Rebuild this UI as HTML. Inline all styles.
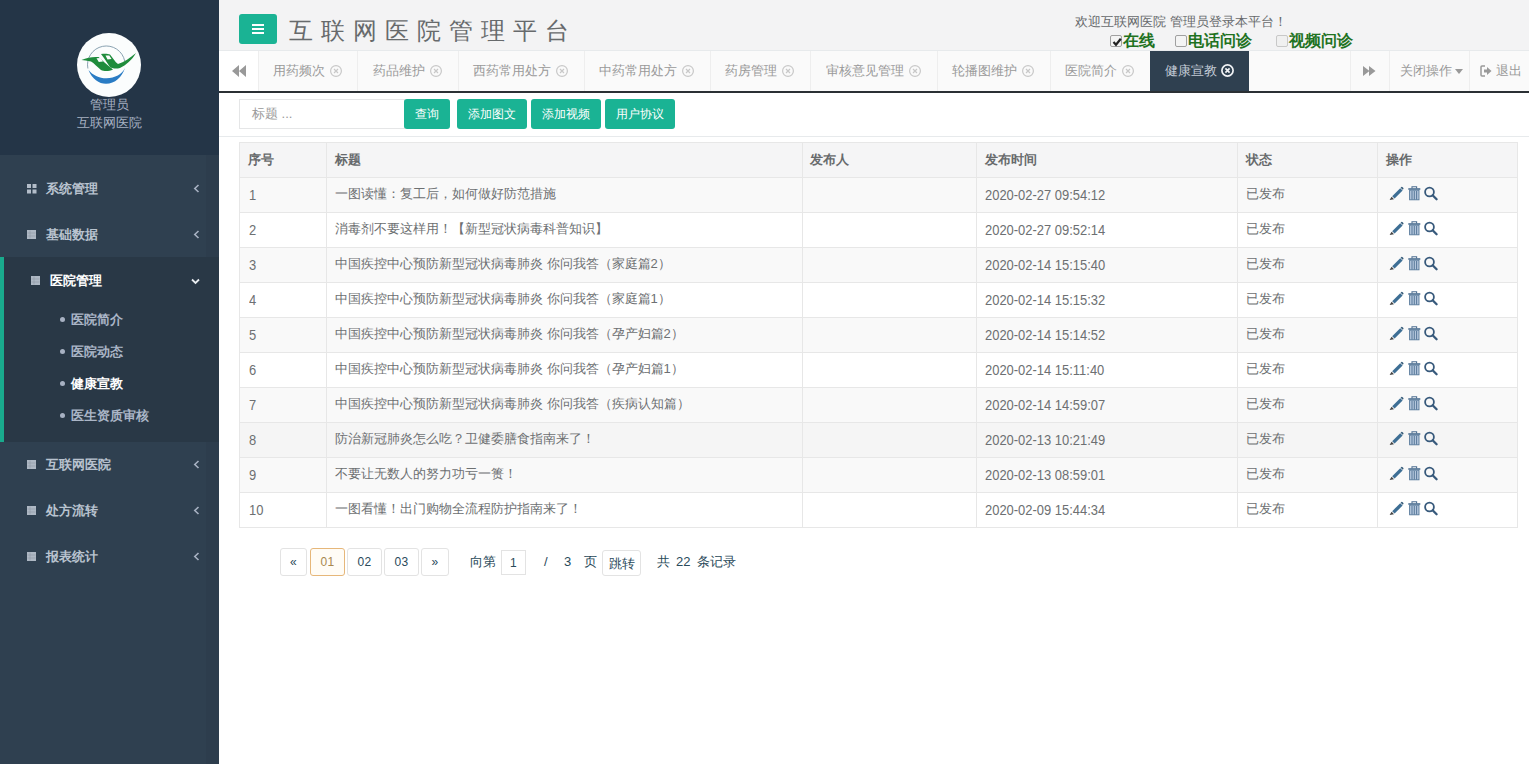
<!DOCTYPE html>
<html><head><meta charset="utf-8">
<style>
*{margin:0;padding:0;box-sizing:border-box}
html,body{width:1529px;height:764px;overflow:hidden;background:#fff;font-family:"Liberation Sans",sans-serif;font-size:13px;color:#676a6c}
.a{position:absolute;white-space:nowrap}
#side{position:absolute;left:0;top:0;width:219px;height:764px;background:#2f4050}
#navh{position:absolute;left:0;top:0;width:219px;height:155px;background:#243547}
#logo{position:absolute;left:77px;top:33px;width:64px;height:64px}
.nh-t{position:absolute;left:0;width:219px;text-align:center;color:#a7b1c2;font-size:13px;line-height:18px}
.mi{position:absolute;left:0;width:219px;height:18px;color:#b9c3cf;font-weight:bold;font-size:13px;line-height:18px}
.mi .ic{position:absolute;left:27px;top:4px}
.mi .tx{position:absolute;left:46px;top:0}
.mi .ar{position:absolute;left:193px;top:4px}
#act{position:absolute;left:0;top:257px;width:219px;height:185px;background:#293846;border-left:4px solid #19aa8d}
.sub{position:absolute;left:60px;color:#aab5c6;font-weight:bold;font-size:13px;line-height:18px;white-space:nowrap}
.sub b{display:inline-block;width:5px;height:5px;border-radius:50%;background:#a7b1c2;margin-right:6px;vertical-align:middle;position:relative;top:-1px}
#head{position:absolute;left:219px;top:0;width:1310px;height:51px;background:#f3f3f4;border-bottom:1px solid #e7eaec}
#mbtn{position:absolute;left:239px;top:14px;width:38px;height:30px;background:#1ab394;border-radius:3px}
#mbtn i{position:absolute;left:13px;width:12px;height:2px;background:#fff}
#title{position:absolute;left:289px;top:16px;font-size:24px;letter-spacing:8px;color:#676a6c;line-height:30px;white-space:nowrap}
#tabs{position:absolute;left:219px;top:51px;width:1310px;height:42px;background:#fafafa;border-bottom:2px solid #2b3034}
.tab{position:absolute;top:51px;height:40px;line-height:40px;color:#999;font-size:13px;border-right:1px solid #eee;white-space:nowrap}
.tab span{position:absolute;top:0}
.tab .x{position:absolute;top:14px;width:12px;height:12px}
#tool{position:absolute;left:219px;top:93px;width:1310px;height:44px;border-bottom:1px solid #e7eaec;background:#fff}
#inp{position:absolute;left:239px;top:99px;width:166px;height:30px;border:1px solid #e5e6e7;color:#999;padding-left:12px;line-height:28px;font-size:13px}
.gb{position:absolute;top:99px;height:30px;background:#1ab394;color:#fff;border-radius:3px;font-size:12px;line-height:30px;text-align:center}
#tbl{position:absolute;left:239px;top:142px;width:1279px;height:386px;border:1px solid #e7e7e7}
.thead{position:absolute;left:0;top:0;width:1277px;height:35px;background:#f5f5f6;border-bottom:1px solid #e7e7e7;font-weight:bold}
.row{position:absolute;left:0;width:1277px;height:35px;border-bottom:1px solid #e7e7e7;color:#6d7072}
.row .c{line-height:32px}
.c{position:absolute;top:0;line-height:34px;white-space:nowrap}
.vl{position:absolute;top:0;width:1px;height:384px;background:#e7e7e7}
.ops{position:absolute;left:1149px;top:8px}
.pg{position:absolute;top:548px;height:28px;border:1px solid #e3e3e3;border-radius:3px;text-align:center;line-height:26px;color:#2a4a5a;font-size:12px;letter-spacing:0.3px;background:#fff}
.pt{position:absolute;top:552px;line-height:20px;color:#2a4a5a;font-size:13px;white-space:nowrap}
.cb{width:12px;height:12px;border:1px solid #a0a0a0;border-radius:2px;background:#f4f4f4}

</style></head><body>
<div id="side">
  <div id="navh"></div><div style="position:absolute;left:206px;top:155px;width:13px;height:609px;background:rgba(20,20,30,0.06)"></div>
  <svg id="logo" width="64" height="64" viewBox="0 0 64 64"><circle cx="32" cy="32" r="32" fill="#fbfdfd"/><path d="M10.9,35.5 A18.4,18.4 0 0 1 47.7,28" fill="none" stroke="#7d97a8" stroke-width="0.9"/><path d="M11.5,37 C15,46 22,50.8 29,50.8 C38,50.8 45,44 48,35 C45,41 38,45.3 29.5,45.3 C22,45.3 15.5,42 11.5,37 Z" fill="#2a7cc4"/><path d="M4.5,27 C10,24.5 16,23.5 21.5,24 C25,27 30,32 36,36.5 C32,38.5 27,38.5 24,37 C20,34 17,30 14,28.5 C10,27.5 7,27.5 4.5,27 Z" fill="#1f8c3c"/><path d="M24,21 C27,20.5 31,20.5 33,21.5 C36,25 38,29 41,31 C47,29 53,25 59,20 C55,27 49,32 43,35 C39,36 35,35.5 33,34 C30,30 27,24.5 24,21 Z" fill="#1f8c3c"/><path d="M19.5,25.2 L23.5,25 L26,28.5 L21.8,29Z M28.5,22.5 L32.3,22.5 L34.5,26 L30.5,26.5Z" fill="#fbfdfd"/></svg>
  <div class="nh-t" style="top:96px">管理员</div>
  <div class="nh-t" style="top:114px">互联网医院</div>
  <div class="mi" style="top:180px"><svg class="ic" width="10" height="10" viewBox="0 0 10 10"><path d="M0 0h4v4h-4zM5.5 0h4v4h-4zM0 5.5h4v4h-4zM5.5 5.5h4v4h-4z" fill="#b3bdc9"/></svg><span class="tx">系统管理</span><svg class="ar" width="7" height="9" viewBox="0 0 7 9"><path d="M5.5 1 L1.8 4.5 L5.5 8" fill="none" stroke="#a7b1c2" stroke-width="1.6"/></svg></div>
  <div class="mi" style="top:226px"><svg class="ic" width="10" height="10" viewBox="0 0 10 10"><rect x="0" y="0" width="9" height="9" fill="#aeb8c4"/><path d="M0.5 3h8M0.5 6h8M3 0.5v8" stroke="#8e99a6" stroke-width="0.6"/></svg><span class="tx">基础数据</span><svg class="ar" width="7" height="9" viewBox="0 0 7 9"><path d="M5.5 1 L1.8 4.5 L5.5 8" fill="none" stroke="#a7b1c2" stroke-width="1.6"/></svg></div>
  <div id="act"></div>
  <div class="mi" style="top:272px;color:#fff"><svg class="ic" style="left:31px" width="10" height="10" viewBox="0 0 10 10"><rect x="0" y="0" width="9" height="9" fill="#aeb8c4"/><path d="M0.5 3h8M0.5 6h8M3 0.5v8" stroke="#8e99a6" stroke-width="0.6"/></svg><span class="tx" style="left:50px">医院管理</span><svg class="ar" style="left:191px;top:6px" width="9" height="7" viewBox="0 0 9 7"><path d="M1 1.5 L4.5 5 L8 1.5" fill="none" stroke="#e8ecf0" stroke-width="1.8"/></svg></div>
  <div class="sub" style="top:311px"><b></b>医院简介</div>
  <div class="sub" style="top:343px"><b></b>医院动态</div>
  <div class="sub" style="top:375px;color:#fff"><b></b>健康宣教</div>
  <div class="sub" style="top:407px"><b></b>医生资质审核</div>
  <div class="mi" style="top:456px"><svg class="ic" width="10" height="10" viewBox="0 0 10 10"><rect x="0" y="0" width="9" height="9" fill="#aeb8c4"/><path d="M0.5 3h8M0.5 6h8M3 0.5v8" stroke="#8e99a6" stroke-width="0.6"/></svg><span class="tx">互联网医院</span><svg class="ar" width="7" height="9" viewBox="0 0 7 9"><path d="M5.5 1 L1.8 4.5 L5.5 8" fill="none" stroke="#a7b1c2" stroke-width="1.6"/></svg></div>
  <div class="mi" style="top:502px"><svg class="ic" width="10" height="10" viewBox="0 0 10 10"><rect x="0" y="0" width="9" height="9" fill="#aeb8c4"/><path d="M0.5 3h8M0.5 6h8M3 0.5v8" stroke="#8e99a6" stroke-width="0.6"/></svg><span class="tx">处方流转</span><svg class="ar" width="7" height="9" viewBox="0 0 7 9"><path d="M5.5 1 L1.8 4.5 L5.5 8" fill="none" stroke="#a7b1c2" stroke-width="1.6"/></svg></div>
  <div class="mi" style="top:548px"><svg class="ic" width="10" height="10" viewBox="0 0 10 10"><rect x="0" y="0" width="9" height="9" fill="#aeb8c4"/><path d="M0.5 3h8M0.5 6h8M3 0.5v8" stroke="#8e99a6" stroke-width="0.6"/></svg><span class="tx">报表统计</span><svg class="ar" width="7" height="9" viewBox="0 0 7 9"><path d="M5.5 1 L1.8 4.5 L5.5 8" fill="none" stroke="#a7b1c2" stroke-width="1.6"/></svg></div>
</div>
<div id="head"></div>
<div id="mbtn"><i style="top:10px"></i><i style="top:14px"></i><i style="top:18px"></i></div>
<div id="title">互联网医院管理平台</div>
<div class="a" style="left:1075px;top:13px;line-height:18px;color:#676a6c">欢迎互联网医院 管理员登录本平台！</div>
<div class="a" style="left:1110px;top:33px;line-height:16px;font-size:16px;font-weight:bold;color:#1f721f">
<span class="a cb" style="left:0;top:2px"><svg class="a" style="left:1px;top:1px" width="10" height="10" viewBox="0 0 10 10"><path d="M1.5 5 L4 7.8 L8.8 1.8" fill="none" stroke="#222" stroke-width="2.2"/></svg></span><span class="a" style="left:13px;top:0">在线</span>
<span class="a cb" style="left:65px;top:2px"></span><span class="a" style="left:78px;top:0">电话问诊</span>
<span class="a cb" style="left:166px;top:2px;border-color:#c8c8c8;background:#f0f0f0"></span><span class="a" style="left:179px;top:0">视频问诊</span>
</div>
<div id="tabs"></div>
<div id="tool"></div>
<div id="inp">标题 ...</div>
<div class="gb" style="left:404px;width:46px">查询</div>
<div class="gb" style="left:457px;width:70px">添加图文</div>
<div class="gb" style="left:531px;width:70px">添加视频</div>
<div class="gb" style="left:605px;width:70px">用户协议</div>
<div class="pg" style="left:280px;width:27px">«</div>
<div class="pg" style="left:310px;width:35px;border-color:#e6b77a;color:#a8884e;background:#fffcf6">01</div>
<div class="pg" style="left:347px;width:35px">02</div>
<div class="pg" style="left:384px;width:35px">03</div>
<div class="pg" style="left:421px;width:28px">»</div>
<div class="pt" style="left:470px">向第</div>
<div class="pg" style="left:501px;top:550px;width:25px;height:25px;line-height:25px;border-radius:0">1</div>
<div class="pt" style="left:544px">/</div>
<div class="pt" style="left:564px">3</div>
<div class="pt" style="left:584px">页</div>
<div class="pg" style="left:602px;top:550px;width:39px;height:26px;line-height:25px;font-size:13px;letter-spacing:0">跳转</div>
<div class="pt" style="left:657px">共</div>
<div class="pt" style="left:676px">22</div>
<div class="pt" style="left:697px">条记录</div>
<div class="tab" style="left:219px;width:40px;background:#fff"><svg class="a" style="left:13px;top:14px" width="14" height="12" viewBox="0 0 14 12"><path d="M7 0 L0 6 L7 12Z M14 0 L7 6 L14 12Z" fill="#999"/></svg></div>
<div class="tab" style="left:258px;width:100px"><span style="left:15px">用药频次</span><svg class="x" style="left:72px" viewBox="0 0 12 12"><circle cx="6" cy="6" r="5.4" fill="none" stroke="#c8c8c8" stroke-width="1.2"/><path d="M4 4L8 8M8 4L4 8" stroke="#c8c8c8" stroke-width="1.2"/></svg></div>
<div class="tab" style="left:357px;width:102px"><span style="left:16px">药品维护</span><svg class="x" style="left:73px" viewBox="0 0 12 12"><circle cx="6" cy="6" r="5.4" fill="none" stroke="#c8c8c8" stroke-width="1.2"/><path d="M4 4L8 8M8 4L4 8" stroke="#c8c8c8" stroke-width="1.2"/></svg></div>
<div class="tab" style="left:458px;width:127px"><span style="left:15px">西药常用处方</span><svg class="x" style="left:98px" viewBox="0 0 12 12"><circle cx="6" cy="6" r="5.4" fill="none" stroke="#c8c8c8" stroke-width="1.2"/><path d="M4 4L8 8M8 4L4 8" stroke="#c8c8c8" stroke-width="1.2"/></svg></div>
<div class="tab" style="left:584px;width:127px"><span style="left:15px">中药常用处方</span><svg class="x" style="left:98px" viewBox="0 0 12 12"><circle cx="6" cy="6" r="5.4" fill="none" stroke="#c8c8c8" stroke-width="1.2"/><path d="M4 4L8 8M8 4L4 8" stroke="#c8c8c8" stroke-width="1.2"/></svg></div>
<div class="tab" style="left:710px;width:101px"><span style="left:15px">药房管理</span><svg class="x" style="left:72px" viewBox="0 0 12 12"><circle cx="6" cy="6" r="5.4" fill="none" stroke="#c8c8c8" stroke-width="1.2"/><path d="M4 4L8 8M8 4L4 8" stroke="#c8c8c8" stroke-width="1.2"/></svg></div>
<div class="tab" style="left:810px;width:128px"><span style="left:16px">审核意见管理</span><svg class="x" style="left:99px" viewBox="0 0 12 12"><circle cx="6" cy="6" r="5.4" fill="none" stroke="#c8c8c8" stroke-width="1.2"/><path d="M4 4L8 8M8 4L4 8" stroke="#c8c8c8" stroke-width="1.2"/></svg></div>
<div class="tab" style="left:937px;width:114px"><span style="left:15px">轮播图维护</span><svg class="x" style="left:85px" viewBox="0 0 12 12"><circle cx="6" cy="6" r="5.4" fill="none" stroke="#c8c8c8" stroke-width="1.2"/><path d="M4 4L8 8M8 4L4 8" stroke="#c8c8c8" stroke-width="1.2"/></svg></div>
<div class="tab" style="left:1050px;width:101px"><span style="left:15px">医院简介</span><svg class="x" style="left:72px" viewBox="0 0 12 12"><circle cx="6" cy="6" r="5.4" fill="none" stroke="#c8c8c8" stroke-width="1.2"/><path d="M4 4L8 8M8 4L4 8" stroke="#c8c8c8" stroke-width="1.2"/></svg></div>
<div class="tab" style="left:1150px;width:99px;background:#2f4050;color:#c5cdd8;border-right:0"><span style="left:15px">健康宣教</span><svg class="x" style="left:71px;top:13px;width:13px;height:13px" viewBox="0 0 13 13"><circle cx="6.5" cy="6.5" r="5.6" fill="none" stroke="#f0f2f5" stroke-width="1.7"/><path d="M4.4 4.4L8.6 8.6M8.6 4.4L4.4 8.6" stroke="#f0f2f5" stroke-width="1.7"/></svg></div>
<div class="tab" style="left:1350px;width:40px;border-left:1px solid #eee"><svg class="a" style="left:11px;top:14px" width="14" height="12" viewBox="0 0 14 12"><path d="M1 1 L7.5 6 L1 11Z M7 1 L13.5 6 L7 11Z" fill="#999"/></svg></div>
<div class="tab" style="left:1390px;width:80px"><span style="left:10px">关闭操作</span><svg class="a" style="left:65px;top:18px" width="8" height="5" viewBox="0 0 8 5"><path d="M0 0H8L4 5Z" fill="#999"/></svg></div>
<div class="tab" style="left:1470px;width:59px;border-right:0"><svg class="a" style="left:10px;top:14px" width="12" height="12" viewBox="0 0 12 12"><path d="M5 1H2Q1 1 1 2V10Q1 11 2 11H5" fill="none" stroke="#999" stroke-width="1.5"/><path d="M4 4.5H7V2L11.5 6L7 10V7.5H4Z" fill="#999"/></svg><span style="left:26px">退出</span></div>
<div id="tbl"><div class="thead"><span class="c" style="left:8px">序号</span><span class="c" style="left:95px">标题</span><span class="c" style="left:570px">发布人</span><span class="c" style="left:745px">发布时间</span><span class="c" style="left:1006px">状态</span><span class="c" style="left:1146px">操作</span></div><div class="row" style="top:35px;background:#f9f9f9"><span class="c" style="left:9px;font-size:14px;top:1px;transform:scaleX(0.925);transform-origin:0 0">1</span><span class="c" style="left:95px">一图读懂：复工后，如何做好防范措施</span><span class="c" style="left:745px;font-size:14px;top:1px;transform:scaleX(0.925);transform-origin:0 0">2020-02-27 09:54:12</span><span class="c" style="left:1006px">已发布</span><svg class="ops" width="50" height="16" viewBox="0 0 50 16"><path d="M3.2 10.2 L11.2 2.2 L13.6 4.6 L5.6 12.6 Z" fill="#3d6e94"/><path d="M11.6 1.8 L12.4 1 Q13 0.6 13.6 1.2 L14.4 2 Q14.8 2.6 14.2 3.2 L13.8 3.8 Z" fill="#345a78"/><path d="M0.6 14 L2.6 10.8 L5 13.2 Z" fill="#444"/><rect x="20.6" y="4.2" width="9.4" height="9.6" fill="#b4c6dc" stroke="#56789a" stroke-width="0.9"/><path d="M23 5v8.5M25.3 5v8.5M27.6 5v8.5" stroke="#4d6f92" stroke-width="0.9"/><rect x="19.3" y="2.2" width="12" height="1.6" fill="#4d6f92"/><path d="M23 2.4V0.8H27.6V2.4" fill="none" stroke="#4d6f92" stroke-width="1.1"/><circle cx="40.5" cy="6" r="4.4" fill="none" stroke="#385a7c" stroke-width="1.8"/><path d="M43.6 9.2 L47.6 13.3" stroke="#385a7c" stroke-width="2.3" stroke-linecap="round"/></svg>
</div><div class="row" style="top:70px;background:#fff"><span class="c" style="left:9px;font-size:14px;top:1px;transform:scaleX(0.925);transform-origin:0 0">2</span><span class="c" style="left:95px">消毒剂不要这样用！【新型冠状病毒科普知识】</span><span class="c" style="left:745px;font-size:14px;top:1px;transform:scaleX(0.925);transform-origin:0 0">2020-02-27 09:52:14</span><span class="c" style="left:1006px">已发布</span><svg class="ops" width="50" height="16" viewBox="0 0 50 16"><path d="M3.2 10.2 L11.2 2.2 L13.6 4.6 L5.6 12.6 Z" fill="#3d6e94"/><path d="M11.6 1.8 L12.4 1 Q13 0.6 13.6 1.2 L14.4 2 Q14.8 2.6 14.2 3.2 L13.8 3.8 Z" fill="#345a78"/><path d="M0.6 14 L2.6 10.8 L5 13.2 Z" fill="#444"/><rect x="20.6" y="4.2" width="9.4" height="9.6" fill="#b4c6dc" stroke="#56789a" stroke-width="0.9"/><path d="M23 5v8.5M25.3 5v8.5M27.6 5v8.5" stroke="#4d6f92" stroke-width="0.9"/><rect x="19.3" y="2.2" width="12" height="1.6" fill="#4d6f92"/><path d="M23 2.4V0.8H27.6V2.4" fill="none" stroke="#4d6f92" stroke-width="1.1"/><circle cx="40.5" cy="6" r="4.4" fill="none" stroke="#385a7c" stroke-width="1.8"/><path d="M43.6 9.2 L47.6 13.3" stroke="#385a7c" stroke-width="2.3" stroke-linecap="round"/></svg>
</div><div class="row" style="top:105px;background:#f9f9f9"><span class="c" style="left:9px;font-size:14px;top:1px;transform:scaleX(0.925);transform-origin:0 0">3</span><span class="c" style="left:95px">中国疾控中心预防新型冠状病毒肺炎 你问我答（家庭篇2）</span><span class="c" style="left:745px;font-size:14px;top:1px;transform:scaleX(0.925);transform-origin:0 0">2020-02-14 15:15:40</span><span class="c" style="left:1006px">已发布</span><svg class="ops" width="50" height="16" viewBox="0 0 50 16"><path d="M3.2 10.2 L11.2 2.2 L13.6 4.6 L5.6 12.6 Z" fill="#3d6e94"/><path d="M11.6 1.8 L12.4 1 Q13 0.6 13.6 1.2 L14.4 2 Q14.8 2.6 14.2 3.2 L13.8 3.8 Z" fill="#345a78"/><path d="M0.6 14 L2.6 10.8 L5 13.2 Z" fill="#444"/><rect x="20.6" y="4.2" width="9.4" height="9.6" fill="#b4c6dc" stroke="#56789a" stroke-width="0.9"/><path d="M23 5v8.5M25.3 5v8.5M27.6 5v8.5" stroke="#4d6f92" stroke-width="0.9"/><rect x="19.3" y="2.2" width="12" height="1.6" fill="#4d6f92"/><path d="M23 2.4V0.8H27.6V2.4" fill="none" stroke="#4d6f92" stroke-width="1.1"/><circle cx="40.5" cy="6" r="4.4" fill="none" stroke="#385a7c" stroke-width="1.8"/><path d="M43.6 9.2 L47.6 13.3" stroke="#385a7c" stroke-width="2.3" stroke-linecap="round"/></svg>
</div><div class="row" style="top:140px;background:#fff"><span class="c" style="left:9px;font-size:14px;top:1px;transform:scaleX(0.925);transform-origin:0 0">4</span><span class="c" style="left:95px">中国疾控中心预防新型冠状病毒肺炎 你问我答（家庭篇1）</span><span class="c" style="left:745px;font-size:14px;top:1px;transform:scaleX(0.925);transform-origin:0 0">2020-02-14 15:15:32</span><span class="c" style="left:1006px">已发布</span><svg class="ops" width="50" height="16" viewBox="0 0 50 16"><path d="M3.2 10.2 L11.2 2.2 L13.6 4.6 L5.6 12.6 Z" fill="#3d6e94"/><path d="M11.6 1.8 L12.4 1 Q13 0.6 13.6 1.2 L14.4 2 Q14.8 2.6 14.2 3.2 L13.8 3.8 Z" fill="#345a78"/><path d="M0.6 14 L2.6 10.8 L5 13.2 Z" fill="#444"/><rect x="20.6" y="4.2" width="9.4" height="9.6" fill="#b4c6dc" stroke="#56789a" stroke-width="0.9"/><path d="M23 5v8.5M25.3 5v8.5M27.6 5v8.5" stroke="#4d6f92" stroke-width="0.9"/><rect x="19.3" y="2.2" width="12" height="1.6" fill="#4d6f92"/><path d="M23 2.4V0.8H27.6V2.4" fill="none" stroke="#4d6f92" stroke-width="1.1"/><circle cx="40.5" cy="6" r="4.4" fill="none" stroke="#385a7c" stroke-width="1.8"/><path d="M43.6 9.2 L47.6 13.3" stroke="#385a7c" stroke-width="2.3" stroke-linecap="round"/></svg>
</div><div class="row" style="top:175px;background:#f9f9f9"><span class="c" style="left:9px;font-size:14px;top:1px;transform:scaleX(0.925);transform-origin:0 0">5</span><span class="c" style="left:95px">中国疾控中心预防新型冠状病毒肺炎 你问我答（孕产妇篇2）</span><span class="c" style="left:745px;font-size:14px;top:1px;transform:scaleX(0.925);transform-origin:0 0">2020-02-14 15:14:52</span><span class="c" style="left:1006px">已发布</span><svg class="ops" width="50" height="16" viewBox="0 0 50 16"><path d="M3.2 10.2 L11.2 2.2 L13.6 4.6 L5.6 12.6 Z" fill="#3d6e94"/><path d="M11.6 1.8 L12.4 1 Q13 0.6 13.6 1.2 L14.4 2 Q14.8 2.6 14.2 3.2 L13.8 3.8 Z" fill="#345a78"/><path d="M0.6 14 L2.6 10.8 L5 13.2 Z" fill="#444"/><rect x="20.6" y="4.2" width="9.4" height="9.6" fill="#b4c6dc" stroke="#56789a" stroke-width="0.9"/><path d="M23 5v8.5M25.3 5v8.5M27.6 5v8.5" stroke="#4d6f92" stroke-width="0.9"/><rect x="19.3" y="2.2" width="12" height="1.6" fill="#4d6f92"/><path d="M23 2.4V0.8H27.6V2.4" fill="none" stroke="#4d6f92" stroke-width="1.1"/><circle cx="40.5" cy="6" r="4.4" fill="none" stroke="#385a7c" stroke-width="1.8"/><path d="M43.6 9.2 L47.6 13.3" stroke="#385a7c" stroke-width="2.3" stroke-linecap="round"/></svg>
</div><div class="row" style="top:210px;background:#fff"><span class="c" style="left:9px;font-size:14px;top:1px;transform:scaleX(0.925);transform-origin:0 0">6</span><span class="c" style="left:95px">中国疾控中心预防新型冠状病毒肺炎 你问我答（孕产妇篇1）</span><span class="c" style="left:745px;font-size:14px;top:1px;transform:scaleX(0.925);transform-origin:0 0">2020-02-14 15:11:40</span><span class="c" style="left:1006px">已发布</span><svg class="ops" width="50" height="16" viewBox="0 0 50 16"><path d="M3.2 10.2 L11.2 2.2 L13.6 4.6 L5.6 12.6 Z" fill="#3d6e94"/><path d="M11.6 1.8 L12.4 1 Q13 0.6 13.6 1.2 L14.4 2 Q14.8 2.6 14.2 3.2 L13.8 3.8 Z" fill="#345a78"/><path d="M0.6 14 L2.6 10.8 L5 13.2 Z" fill="#444"/><rect x="20.6" y="4.2" width="9.4" height="9.6" fill="#b4c6dc" stroke="#56789a" stroke-width="0.9"/><path d="M23 5v8.5M25.3 5v8.5M27.6 5v8.5" stroke="#4d6f92" stroke-width="0.9"/><rect x="19.3" y="2.2" width="12" height="1.6" fill="#4d6f92"/><path d="M23 2.4V0.8H27.6V2.4" fill="none" stroke="#4d6f92" stroke-width="1.1"/><circle cx="40.5" cy="6" r="4.4" fill="none" stroke="#385a7c" stroke-width="1.8"/><path d="M43.6 9.2 L47.6 13.3" stroke="#385a7c" stroke-width="2.3" stroke-linecap="round"/></svg>
</div><div class="row" style="top:245px;background:#f9f9f9"><span class="c" style="left:9px;font-size:14px;top:1px;transform:scaleX(0.925);transform-origin:0 0">7</span><span class="c" style="left:95px">中国疾控中心预防新型冠状病毒肺炎 你问我答（疾病认知篇）</span><span class="c" style="left:745px;font-size:14px;top:1px;transform:scaleX(0.925);transform-origin:0 0">2020-02-14 14:59:07</span><span class="c" style="left:1006px">已发布</span><svg class="ops" width="50" height="16" viewBox="0 0 50 16"><path d="M3.2 10.2 L11.2 2.2 L13.6 4.6 L5.6 12.6 Z" fill="#3d6e94"/><path d="M11.6 1.8 L12.4 1 Q13 0.6 13.6 1.2 L14.4 2 Q14.8 2.6 14.2 3.2 L13.8 3.8 Z" fill="#345a78"/><path d="M0.6 14 L2.6 10.8 L5 13.2 Z" fill="#444"/><rect x="20.6" y="4.2" width="9.4" height="9.6" fill="#b4c6dc" stroke="#56789a" stroke-width="0.9"/><path d="M23 5v8.5M25.3 5v8.5M27.6 5v8.5" stroke="#4d6f92" stroke-width="0.9"/><rect x="19.3" y="2.2" width="12" height="1.6" fill="#4d6f92"/><path d="M23 2.4V0.8H27.6V2.4" fill="none" stroke="#4d6f92" stroke-width="1.1"/><circle cx="40.5" cy="6" r="4.4" fill="none" stroke="#385a7c" stroke-width="1.8"/><path d="M43.6 9.2 L47.6 13.3" stroke="#385a7c" stroke-width="2.3" stroke-linecap="round"/></svg>
</div><div class="row" style="top:280px;background:#f5f5f5"><span class="c" style="left:9px;font-size:14px;top:1px;transform:scaleX(0.925);transform-origin:0 0">8</span><span class="c" style="left:95px">防治新冠肺炎怎么吃？卫健委膳食指南来了！</span><span class="c" style="left:745px;font-size:14px;top:1px;transform:scaleX(0.925);transform-origin:0 0">2020-02-13 10:21:49</span><span class="c" style="left:1006px">已发布</span><svg class="ops" width="50" height="16" viewBox="0 0 50 16"><path d="M3.2 10.2 L11.2 2.2 L13.6 4.6 L5.6 12.6 Z" fill="#3d6e94"/><path d="M11.6 1.8 L12.4 1 Q13 0.6 13.6 1.2 L14.4 2 Q14.8 2.6 14.2 3.2 L13.8 3.8 Z" fill="#345a78"/><path d="M0.6 14 L2.6 10.8 L5 13.2 Z" fill="#444"/><rect x="20.6" y="4.2" width="9.4" height="9.6" fill="#b4c6dc" stroke="#56789a" stroke-width="0.9"/><path d="M23 5v8.5M25.3 5v8.5M27.6 5v8.5" stroke="#4d6f92" stroke-width="0.9"/><rect x="19.3" y="2.2" width="12" height="1.6" fill="#4d6f92"/><path d="M23 2.4V0.8H27.6V2.4" fill="none" stroke="#4d6f92" stroke-width="1.1"/><circle cx="40.5" cy="6" r="4.4" fill="none" stroke="#385a7c" stroke-width="1.8"/><path d="M43.6 9.2 L47.6 13.3" stroke="#385a7c" stroke-width="2.3" stroke-linecap="round"/></svg>
</div><div class="row" style="top:315px;background:#f9f9f9"><span class="c" style="left:9px;font-size:14px;top:1px;transform:scaleX(0.925);transform-origin:0 0">9</span><span class="c" style="left:95px">不要让无数人的努力功亏一篑！</span><span class="c" style="left:745px;font-size:14px;top:1px;transform:scaleX(0.925);transform-origin:0 0">2020-02-13 08:59:01</span><span class="c" style="left:1006px">已发布</span><svg class="ops" width="50" height="16" viewBox="0 0 50 16"><path d="M3.2 10.2 L11.2 2.2 L13.6 4.6 L5.6 12.6 Z" fill="#3d6e94"/><path d="M11.6 1.8 L12.4 1 Q13 0.6 13.6 1.2 L14.4 2 Q14.8 2.6 14.2 3.2 L13.8 3.8 Z" fill="#345a78"/><path d="M0.6 14 L2.6 10.8 L5 13.2 Z" fill="#444"/><rect x="20.6" y="4.2" width="9.4" height="9.6" fill="#b4c6dc" stroke="#56789a" stroke-width="0.9"/><path d="M23 5v8.5M25.3 5v8.5M27.6 5v8.5" stroke="#4d6f92" stroke-width="0.9"/><rect x="19.3" y="2.2" width="12" height="1.6" fill="#4d6f92"/><path d="M23 2.4V0.8H27.6V2.4" fill="none" stroke="#4d6f92" stroke-width="1.1"/><circle cx="40.5" cy="6" r="4.4" fill="none" stroke="#385a7c" stroke-width="1.8"/><path d="M43.6 9.2 L47.6 13.3" stroke="#385a7c" stroke-width="2.3" stroke-linecap="round"/></svg>
</div><div class="row" style="top:350px;background:#fff"><span class="c" style="left:9px;font-size:14px;top:1px;transform:scaleX(0.925);transform-origin:0 0">10</span><span class="c" style="left:95px">一图看懂！出门购物全流程防护指南来了！</span><span class="c" style="left:745px;font-size:14px;top:1px;transform:scaleX(0.925);transform-origin:0 0">2020-02-09 15:44:34</span><span class="c" style="left:1006px">已发布</span><svg class="ops" width="50" height="16" viewBox="0 0 50 16"><path d="M3.2 10.2 L11.2 2.2 L13.6 4.6 L5.6 12.6 Z" fill="#3d6e94"/><path d="M11.6 1.8 L12.4 1 Q13 0.6 13.6 1.2 L14.4 2 Q14.8 2.6 14.2 3.2 L13.8 3.8 Z" fill="#345a78"/><path d="M0.6 14 L2.6 10.8 L5 13.2 Z" fill="#444"/><rect x="20.6" y="4.2" width="9.4" height="9.6" fill="#b4c6dc" stroke="#56789a" stroke-width="0.9"/><path d="M23 5v8.5M25.3 5v8.5M27.6 5v8.5" stroke="#4d6f92" stroke-width="0.9"/><rect x="19.3" y="2.2" width="12" height="1.6" fill="#4d6f92"/><path d="M23 2.4V0.8H27.6V2.4" fill="none" stroke="#4d6f92" stroke-width="1.1"/><circle cx="40.5" cy="6" r="4.4" fill="none" stroke="#385a7c" stroke-width="1.8"/><path d="M43.6 9.2 L47.6 13.3" stroke="#385a7c" stroke-width="2.3" stroke-linecap="round"/></svg>
</div><div class="vl" style="left:86px"></div><div class="vl" style="left:562px"></div><div class="vl" style="left:736px"></div><div class="vl" style="left:997px"></div><div class="vl" style="left:1137px"></div></div>
</body></html>
